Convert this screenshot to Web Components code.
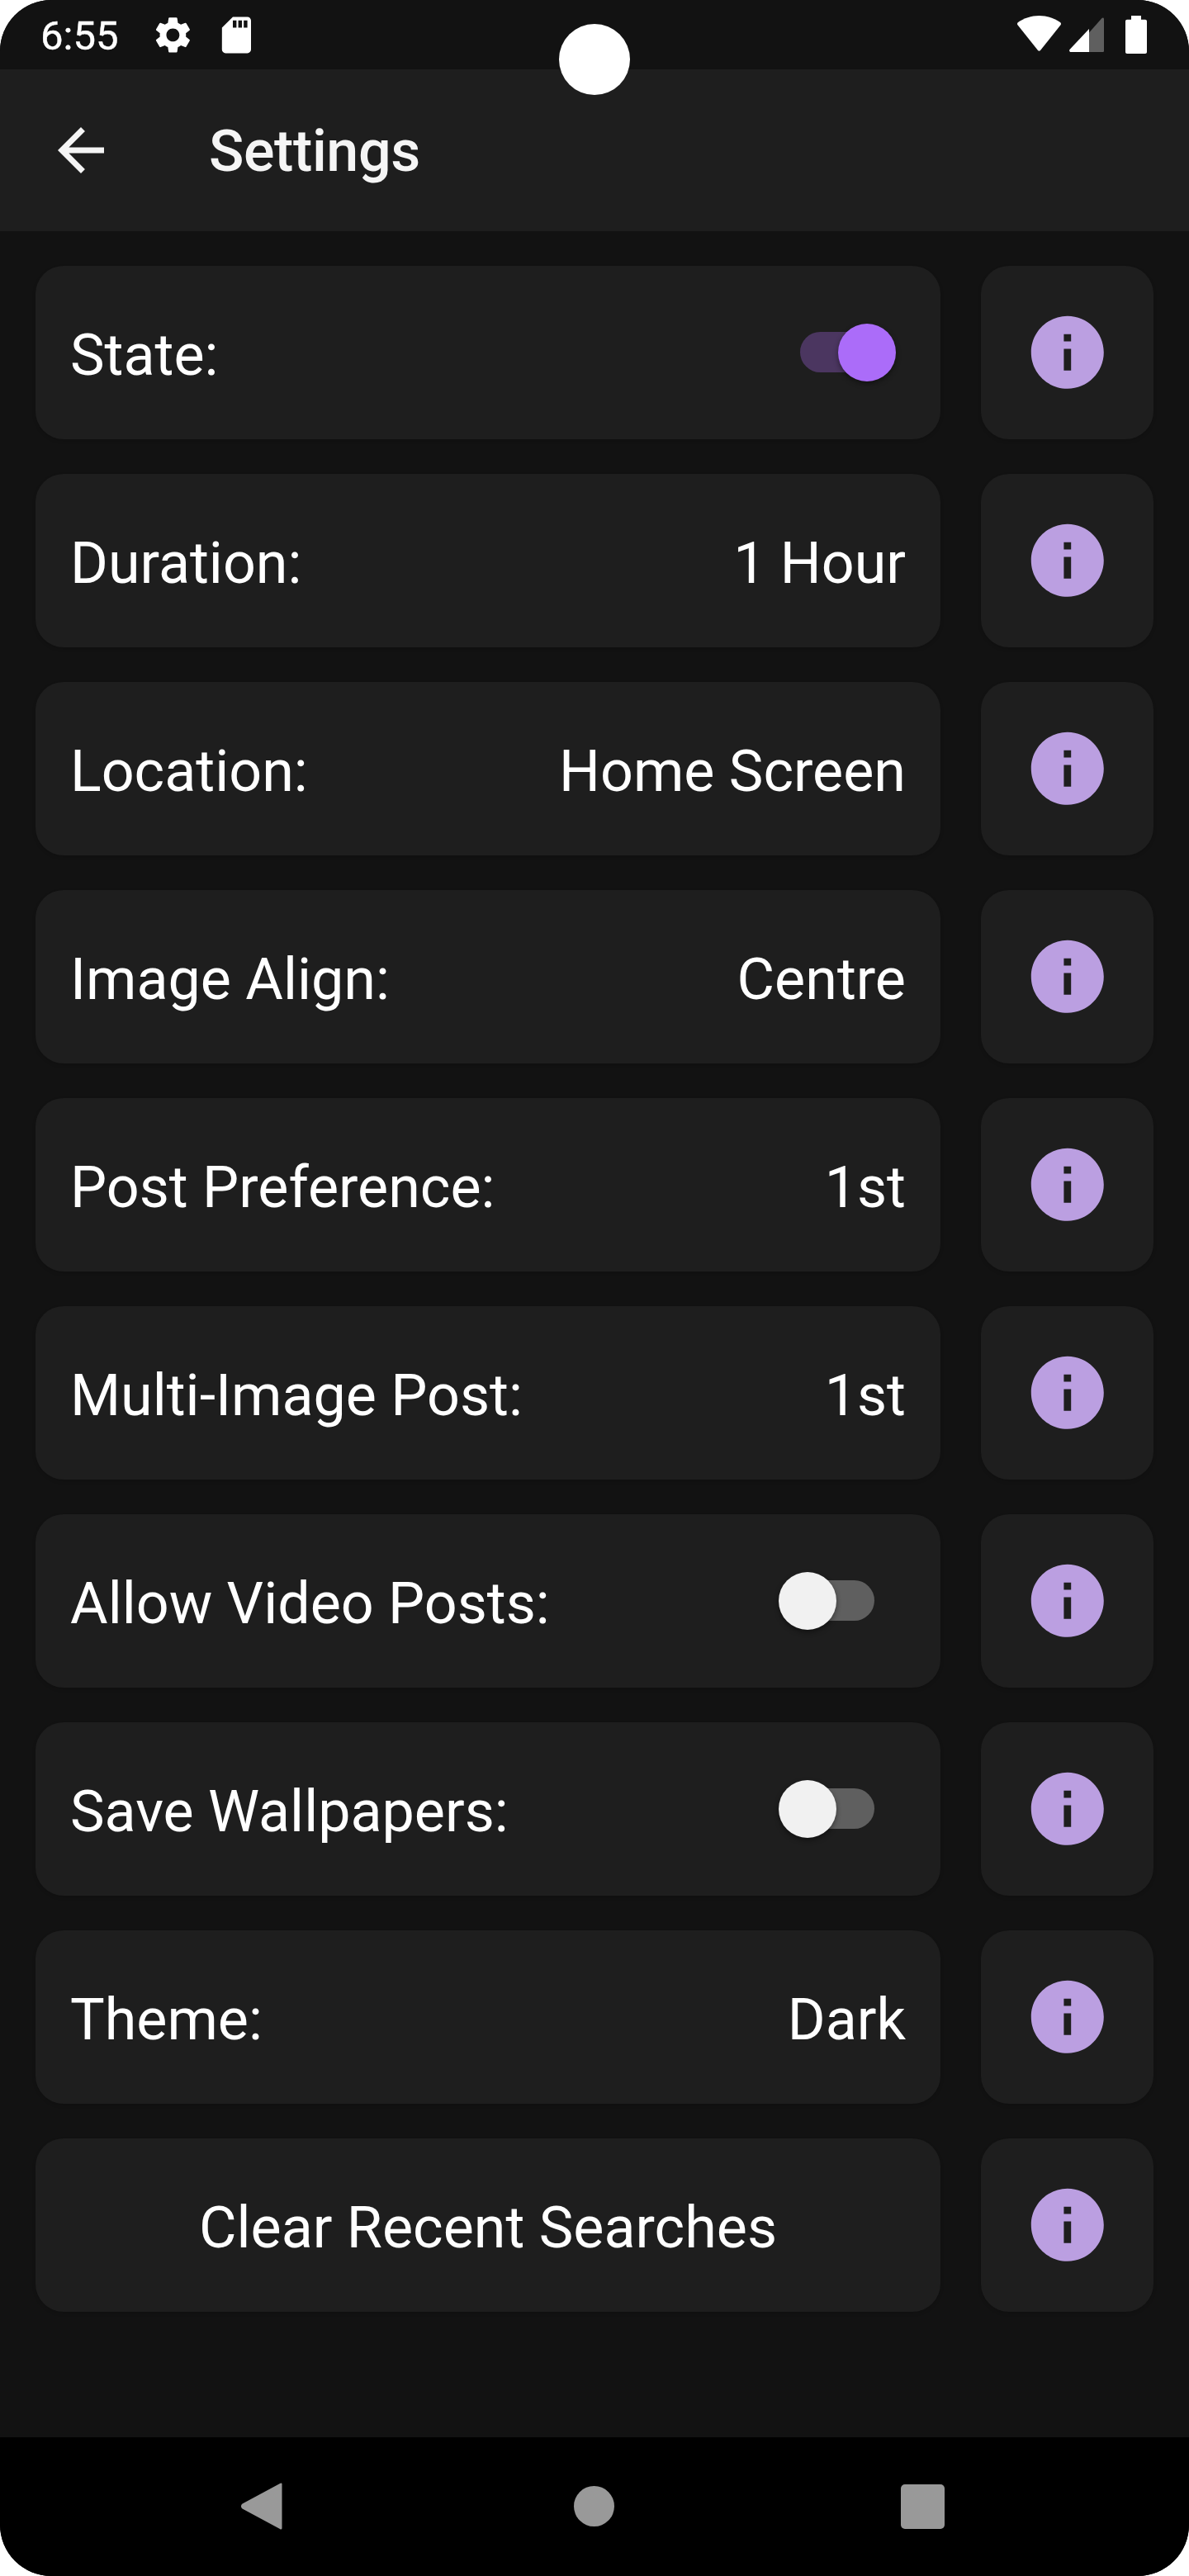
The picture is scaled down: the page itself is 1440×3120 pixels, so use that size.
<!doctype html>
<html lang="en"><head><meta charset="utf-8"><title>Settings</title>
<style>html,body{margin:0;padding:0;background:#fff;font-family:Roboto,"Liberation Sans",sans-serif}</style>
</head><body>
<phone-screen>
  <status-bar slot="status"></status-bar>
  <app-bar slot="bar">Settings</app-bar>
  <settings-list>
    <setting-row>State:<toggle-switch slot="control" on></toggle-switch></setting-row>
    <setting-row>Duration:<span slot="control">1 Hour</span></setting-row>
    <setting-row>Location:<span slot="control">Home Screen</span></setting-row>
    <setting-row>Image Align:<span slot="control">Centre</span></setting-row>
    <setting-row>Post Preference:<span slot="control">1st</span></setting-row>
    <setting-row>Multi-Image Post:<span slot="control">1st</span></setting-row>
    <setting-row>Allow Video Posts:<toggle-switch slot="control"></toggle-switch></setting-row>
    <setting-row>Save Wallpapers:<toggle-switch slot="control"></toggle-switch></setting-row>
    <setting-row>Theme:<span slot="control">Dark</span></setting-row>
    <setting-row center>Clear Recent Searches</setting-row>
  </settings-list>
  <nav-bar slot="nav"></nav-bar>
</phone-screen>
<script>
function def(name, html){
  customElements.define(name, class extends HTMLElement{
    constructor(){super();this.attachShadow({mode:'open'}).innerHTML=html;}
  });
}
def('phone-screen',`<style>
:host{display:block;width:1440px;height:3120px}
.s{position:relative;width:1440px;height:3120px;border-radius:62px;overflow:hidden;background:#121212;display:flex;flex-direction:column}
.m{flex:1;min-height:0}
.cam{position:absolute;left:677px;top:29px;width:86px;height:86px;border-radius:50%;background:#fff}
</style><div class="s"><slot name="status"></slot><slot name="bar"></slot><div class="m"><slot></slot></div><slot name="nav"></slot><div class="cam"></div></div>`);

def('status-bar',`<style>
:host{display:flex;align-items:flex-start;height:84px;background:#121212;color:#fff;flex:none}
.t{font:400 49px/57px Roboto,sans-serif;margin:15px 0 0 49px;width:138px;height:57px;-webkit-text-stroke:.4px #fff}
svg{display:block;fill:#fff}
.g{margin:15.6px 0 0 -4px}
.sd{margin:15.6px 0 0 24px}
.sp{flex:1}
.w{margin:19px 0 0 0}
.c{margin:21px 0 0 10px}
.b{margin:19px 51px 0 26px}
</style><span class="t">6:55</span>
<svg class="g" width="52.8" height="52.8" viewBox="0 0 24 24"><path d="M19.14 12.94c.04-.3.06-.61.06-.94 0-.32-.02-.64-.07-.94l2.03-1.58c.18-.14.23-.41.12-.61l-1.92-3.32c-.12-.22-.37-.29-.59-.22l-2.39.96c-.5-.38-1.03-.7-1.62-.94l-.36-2.54c-.04-.24-.24-.41-.48-.41h-3.84c-.24 0-.43.17-.47.41l-.36 2.54c-.59.24-1.13.57-1.62.94l-2.39-.96c-.22-.08-.47 0-.59.22L2.74 8.87c-.12.21-.08.47.12.61l2.03 1.58c-.05.3-.09.63-.09.94s.02.64.07.94l-2.03 1.58c-.18.14-.23.41-.12.61l1.92 3.32c.12.22.37.29.59.22l2.39-.96c.5.38 1.03.7 1.62.94l.36 2.54c.05.24.24.41.48.41h3.84c.24 0 .44-.17.47-.41l.36-2.54c.59-.24 1.13-.56 1.62-.94l2.39.96c.22.08.47 0 .59-.22l1.92-3.32c.12-.22.07-.47-.12-.61l-2.01-1.58zM12 15.6c-1.98 0-3.6-1.62-3.6-3.6s1.62-3.6 3.6-3.6 3.6 1.62 3.6 3.6-1.62 3.6-3.6 3.6z"/></svg>
<svg class="sd" width="52.8" height="52.8" viewBox="0 0 24 24"><path d="M18 2h-8L4.02 8 4 20c0 1.1.9 2 2 2h12c1.1 0 2-.9 2-2V4c0-1.1-.9-2-2-2zm-6 6h-2V4h2v4zm3 0h-2V4h2v4zm3 0h-2V4h2v4z"/></svg>
<span class="sp"></span>
<svg class="w" width="53" height="43" viewBox="0 0 53 43"><path d="M1 8C8 3 17 0 26.500 0S45 3 52 8C53 8.800 53.300 10 52.700 11L28 42C27.200 43 25.800 43 25 42L.3 11C-.3 10 0 8.800 1 8Z"/></svg>
<svg class="c" width="42" height="43" viewBox="0 0 42 43"><path fill="#5f5f5f" d="M24 18.500 39.500 1C40.500 0 42 .5 42 2V40.500C42 41.500 41.300 42 40.500 42H24Z"/><path d="M24 42H2C.5 42-.5 40.500.5 39L24 14Z"/></svg>
<svg class="b" width="26" height="46" viewBox="0 0 26 46"><path d="M7 0H19V4.700H24C25.100 4.700 26 5.600 26 6.700V44C26 45.100 25.100 46 24 46H2C.9 46 0 45.100 0 44V6.700C0 5.600 .9 4.700 2 4.700H7Z"/></svg>`);

def('app-bar',`<style>
:host{display:flex;align-items:center;height:196px;background:#1e1e1e;color:#f5f5f5;flex:none;box-sizing:border-box;padding-left:56px}
svg{display:block;flex:none;fill:#f5f5f5;margin-right:113px}
.t{font:500 70px/84px Roboto,sans-serif;letter-spacing:-.4px;padding-top:2px}
</style><svg width="84" height="84" viewBox="0 0 24 24"><path d="M20 11H7.830l5.590-5.590L12 4l-8 8 8 8 1.410-1.410L7.830 13H20v-2z"/></svg><span class="t"><slot></slot></span>`);

def('settings-list',`<style>
:host{display:flex;flex-direction:column;gap:42px;padding:42px 43px 0}
</style><slot></slot>`);

def('setting-row',`<style>
:host{display:grid;grid-template-columns:1096px 209px;column-gap:49px;height:210px;font:400 70px/82px Roboto,sans-serif;color:#fff}
.card{background:#1e1e1e;border-radius:34px;display:flex;align-items:center;justify-content:space-between;padding:6px 42px 0;box-sizing:border-box;box-shadow:0 2px 4px rgba(0,0,0,.15)}
:host([center]) .card{justify-content:center}
</style><div class="card"><span><slot></slot></span><slot name="control"></slot></div><info-button></info-button>`);

def('info-button',`<style>
:host{display:flex;align-items:center;justify-content:center;background:#1e1e1e;border-radius:34px;box-shadow:0 2px 4px rgba(0,0,0,.15)}
svg{display:block;fill:#bb9fe1;margin-top:-1px}
</style><svg width="105.6" height="105.600" viewBox="0 0 24 24"><path d="M12 2C6.480 2 2 6.480 2 12s4.480 10 10 10 10-4.480 10-10S17.520 2 12 2zm1 15h-2v-6h2v6zm0-8h-2V7h2v2z"/></svg>`);

def('toggle-switch',`<style>
:host{display:block;position:relative;width:90px;height:49px;margin:-7px 38px 0 0;border-radius:25px;background:#5f5f5f}
:host([on]){background:#4b3660}
.k{position:absolute;top:-10px;left:-26px;width:70px;height:70px;border-radius:50%;background:#f1f1f1;box-shadow:0 3px 6px rgba(0,0,0,.4)}
:host([on]) .k{left:46px;background:#ab6cf9}
</style><div class="k"></div>`);

def('nav-bar',`<style>
:host{display:block;position:relative;height:168px;background:#000;flex:none}
svg{position:absolute;fill:#999}
.c{position:absolute;left:695px;top:59px;width:49px;height:49px;border-radius:50%;background:#999}
.q{position:absolute;left:1091px;top:57px;width:53px;height:54px;border-radius:5px;background:#999}
</style><svg style="left:292px;top:55px" width="50" height="57" viewBox="0 0 50 57"><path d="M49.500 1.500V55C49.500 56.500 48.200 57 47 56L1.500 31.500C-.5 30-.5 27 1.500 25.500L47 1C48.200 0 49.500.5 49.500 1.500Z"/></svg><div class="c"></div><div class="q"></div>`);
</script>
</body></html>
